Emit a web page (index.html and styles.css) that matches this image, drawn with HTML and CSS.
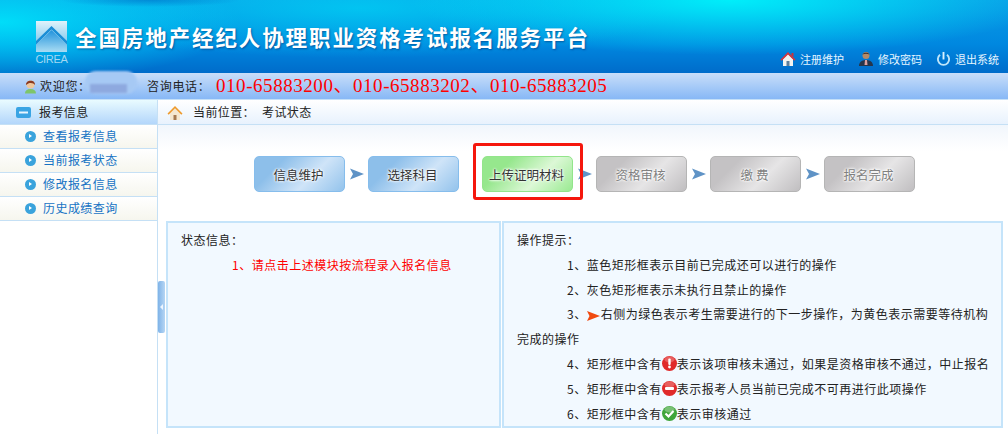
FILE: index.html
```html
<!DOCTYPE html>
<html lang="zh-CN">
<head>
<meta charset="utf-8">
<title>全国房地产经纪人协理职业资格考试报名服务平台</title>
<link rel="stylesheet" href="styles.css">
</head>
<body>
<header class="top">
  <div class="logo">
    <svg class="logo-mark" viewBox="0 0 31 31" width="31" height="31">
      <defs>
        <linearGradient id="lg" x1="0" y1="0" x2="0" y2="1"><stop offset="0" stop-color="#dff3fb"/><stop offset="1" stop-color="#5db8e8"/></linearGradient>
        <linearGradient id="lh" x1="0" y1="0" x2="0" y2="1"><stop offset="0" stop-color="#1f92dc"/><stop offset="1" stop-color="#a9dcf3"/></linearGradient>
      </defs>
      <rect width="31" height="31" fill="url(#lg)"/>
      <path d="M0 24 L15.500 9 L31 24 L31 31 L0 31Z" fill="url(#lh)"/>
      <path d="M0 20 L15.500 5 L31 20 L31 23.500 L15.500 8.500 L0 23.500Z" fill="#1a8ed6"/>
    </svg>
    <span class="logo-name">CIREA</span>
  </div>
  <h1 class="title">全国房地产经纪人协理职业资格考试报名服务平台</h1>
  <nav class="top-nav">
    <a class="top-link">
      <svg viewBox="0 0 16 16" width="16" height="16"><path d="M3 8v7h10V8L8 3z" fill="#f4f4f0"/><rect x="6.500" y="10" width="3" height="5" fill="#5c7f9c"/><path d="M11.500 2h2v4l-2-1.500z" fill="#c9323a"/><path d="M0.500 8.500 8 1l7.500 7.500-1.200 1.200L8 3.500 1.700 9.700z" fill="#d8343a"/></svg>
      <span>注册维护</span>
    </a>
    <a class="top-link">
      <svg viewBox="0 0 16 16" width="16" height="16"><circle cx="8" cy="4.500" r="3.500" fill="#b58a66"/><path d="M4.500 3.500C5 1 11 1 11.500 3.500 9.500 2.500 6.500 2.500 4.500 3.500z" fill="#3a3030"/><path d="M1 15c0-4 3-6 7-6s7 2 7 6z" fill="#26354a"/><path d="M7 9h2l.5 5h-3z" fill="#d9a0a0"/></svg>
      <span>修改密码</span>
    </a>
    <a class="top-link">
      <svg viewBox="0 0 16 16" width="15" height="16"><path d="M4.300 3.500a6 6 0 1 0 7.400 0" fill="none" stroke="#bfe6fa" stroke-width="2"/><rect x="7" y="0.500" width="2" height="8" fill="#d8f2ff"/></svg>
      <span>退出系统</span>
    </a>
  </nav>
</header>

<div class="welcome">
  <svg class="avatar" viewBox="0 0 13 16" width="13" height="16"><path d="M1 15.500c0-3 2-4.500 5.500-4.500S12 12.500 12 15.500z" fill="#7ec56a"/><circle cx="6.500" cy="6.500" r="4" fill="#f0c79c"/><path d="M2 7C1.500 1.500 11.500 1 11 7 9.500 4.500 5 4 2 7z" fill="#8a3a22"/></svg>
  <span class="welcome-label">欢迎您：</span>
  <span class="redacted"></span>
  <span class="hotline-label">咨询电话：</span>
  <span class="hotline">010-65883200、010-65883202、010-65883205</span>
</div>

<div class="main">
  <aside class="side">
    <div class="side-head">
      <svg viewBox="0 0 15 11" width="15" height="11"><rect width="15" height="11" rx="2" fill="#39a4e4"/><rect x="3" y="4.500" width="9" height="2" fill="#e8f6ff"/></svg>
      <span>报考信息</span>
    </div>
    <ul class="side-list">
      <li class="side-item"><i class="bullet"></i>查看报考信息</li>
      <li class="side-item"><i class="bullet"></i>当前报考状态</li>
      <li class="side-item"><i class="bullet"></i>修改报名信息</li>
      <li class="side-item"><i class="bullet"></i>历史成绩查询</li>
    </ul>
    <div class="collapse"><i></i></div>
  </aside>

  <main class="content">
    <div class="crumb">
      <svg viewBox="0 0 16 15" width="16" height="15"><path d="M3 8v7h10V8L8 3z" fill="#f4e8d0"/><rect x="6.500" y="10" width="3" height="5" fill="#a57a50"/><path d="M0.500 8.500 8 1l7.500 7.500-1.200 1.200L8 3.300 1.700 9.700z" fill="#ee9a2c"/></svg>
      <span class="crumb-label">当前位置：</span>
      <span>考试状态</span>
    </div>

    <div class="steps">
      <span class="step blue">信息维护</span>
      <svg class="arrow" viewBox="0 0 14 12" width="14" height="12"><path d="M0 0.500 14 6 0 11.500 3 6z"/></svg>
      <span class="step blue">选择科目</span>
      <span class="step green">上传证明材料</span>
      <svg class="arrow" viewBox="0 0 14 12" width="14" height="12"><path d="M0 0.500 14 6 0 11.500 3 6z"/></svg>
      <span class="step gray">资格审核</span>
      <svg class="arrow" viewBox="0 0 14 12" width="14" height="12"><path d="M0 0.500 14 6 0 11.500 3 6z"/></svg>
      <span class="step gray">缴 费</span>
      <svg class="arrow" viewBox="0 0 14 12" width="14" height="12"><path d="M0 0.500 14 6 0 11.500 3 6z"/></svg>
      <span class="step gray">报名完成</span>
    </div>

    <div class="panels">
      <section class="panel state">
        <p class="line">状态信息：</p>
        <p class="line indent alert">1、请点击上述模块按流程录入报名信息</p>
      </section>
      <section class="panel tips">
        <p class="line">操作提示：</p>
        <p class="line indent">1、蓝色矩形框表示目前已完成还可以进行的操作</p>
        <p class="line indent">2、灰色矩形框表示未执行且禁止的操作</p>
        <p class="line indent">3、<svg class="ico-arrow" viewBox="0 0 13 10" width="13" height="10"><path d="M0 0 13 5 0 10 2.500 5z" fill="#f04a10"/></svg>右侧为绿色表示考生需要进行的下一步操作，为黄色表示需要等待机构</p>
        <p class="line">完成的操作</p>
        <p class="line indent">4、矩形框中含有<svg class="ico" viewBox="0 0 15 15" width="15" height="15"><circle cx="7.500" cy="7.500" r="7.500" fill="#e02a2a"/><ellipse cx="7.500" cy="3.500" rx="5" ry="3" fill="#fff" opacity=".25"/><rect x="6.300" y="2.500" width="2.400" height="6.500" rx="1" fill="#fff"/><circle cx="7.500" cy="11" r="1.400" fill="#fff"/></svg>表示该项审核未通过，如果是资格审核不通过，中止报名</p>
        <p class="line indent">5、矩形框中含有<svg class="ico" viewBox="0 0 15 15" width="15" height="15"><circle cx="7.500" cy="7.500" r="7.500" fill="#e02a2a"/><ellipse cx="7.500" cy="3.500" rx="5" ry="3" fill="#fff" opacity=".25"/><rect x="3" y="6" width="9" height="3" rx="1" fill="#fff"/></svg>表示报考人员当前已完成不可再进行此项操作</p>
        <p class="line indent">6、矩形框中含有<svg class="ico" viewBox="0 0 15 15" width="15" height="15"><circle cx="7.500" cy="7.500" r="7.500" fill="#3fa53a"/><ellipse cx="7.500" cy="3.500" rx="5" ry="3" fill="#fff" opacity=".3"/><path d="M3.500 7.500 6.500 10.500 11.500 5" fill="none" stroke="#fff" stroke-width="2.200"/></svg>表示审核通过</p>
      </section>
    </div>
  </main>
</div>
</body>
</html>
```
FILE: styles.css
```css
* { box-sizing: border-box; }
html, body { margin: 0; padding: 0; }
body {
  width: 1008px;
  height: 434px;
  overflow: hidden;
  background: #fff;
  font: 12px/1.2 "Noto Sans CJK SC", "Liberation Sans", sans-serif;
  color: #222;
}
p, h1, ul { margin: 0; padding: 0; }
ul { list-style: none; }

.top {
  height: 73px;
  display: flex;
  align-items: flex-start;
  padding: 21px 9px 0 36px;
  background:
    radial-gradient(ellipse 90px 7px at 150px 0, rgba(0,120,205,.7), rgba(0,120,205,0)),
    radial-gradient(ellipse 320px 55px at 730px 0, rgba(0,238,250,1), rgba(0,210,248,0)),
    radial-gradient(ellipse 240px 60px at 0 22px, rgba(0,225,250,.95), rgba(0,200,245,0)),
    radial-gradient(ellipse 320px 50px at 360px 8px, rgba(0,210,245,.75), rgba(0,200,245,0)),
    linear-gradient(#0a9ce6, #0088e0 60%, #006cca);
}
.logo { width: 31px; display: flex; flex-direction: column; align-items: center; }
.logo-mark { display: block; }
.logo-name { font: 11px/10px "Liberation Sans", sans-serif; color: #a4d8f2; margin-top: 2px; letter-spacing: -.3px; }
.title {
  margin: 2px 0 0 8px;
  font-size: 21.500px;
  line-height: 28px;
  font-weight: 700;
  letter-spacing: 1.900px;
  white-space: nowrap;
  color: #fff;
  text-shadow: 1px 1px 2px rgba(0,40,110,.55);
}
.top-nav { margin-left: auto; margin-top: 30px; display: flex; gap: 14px; }
.top-link { display: flex; align-items: center; gap: 4px; color: #e6f5ff; font-size: 11px; line-height: 16px; }
.top-link svg { display: block; }

.welcome {
  height: 27px;
  display: flex;
  align-items: center;
  padding: 0 0 0 24px;
  background: linear-gradient(#c9def9, #87b8f6);
  border-bottom: 1px solid #c5e0f8;
}
.avatar { display: block; margin-right: 3px; }
.welcome-label { letter-spacing: .7px; width: 45px; white-space: nowrap; }
.redacted {
  width: 52px;
  height: 23px;
  margin: -7px 10px 0 0;
  border-radius: 11px;
  background: linear-gradient(#8ea9df, #8ea9df) 5px 13px / 37px 9px no-repeat, #a6c9f4;
  filter: blur(1px);
}
.hotline-label { letter-spacing: .7px; width: 69px; white-space: nowrap; }
.hotline {
  font: 19px/20px "Liberation Serif", "Noto Sans CJK SC", serif;
  color: #f00;
  white-space: nowrap;
  letter-spacing: .55px;
}

.main { display: flex; height: 334px; }

.side { position: relative; width: 158px; flex: none; border-right: 1px solid #c5e0f5; }
.side-head {
  height: 25px;
  display: flex;
  align-items: center;
  padding-left: 16px;
  gap: 8px;
  letter-spacing: .4px;
  background: linear-gradient(#e9fbff, #b3d6fb);
  border-bottom: 1px solid #c5e0f5;
}
.side-head svg { display: block; }
.side-item {
  height: 24px;
  display: flex;
  align-items: center;
  padding-left: 25px;
  color: #1673c4;
  letter-spacing: .45px;
  background: linear-gradient(#fff, #f6f6ee);
  border-bottom: 1px solid #c5e0f5;
}
.bullet {
  width: 11px;
  height: 11px;
  margin-right: 7px;
  border-radius: 50%;
  background: #3aa3dc;
  position: relative;
}
.bullet::after {
  content: "";
  position: absolute;
  left: 4px;
  top: 3px;
  border: 2.500px solid transparent;
  border-left: 3.500px solid #fff;
  border-right: 0;
}
.collapse {
  position: absolute;
  right: -8px;
  top: 181px;
  width: 7px;
  height: 52px;
  border-radius: 2px;
  background: linear-gradient(90deg, #7fb3e8, #b6d6f4);
  display: flex;
  align-items: center;
  justify-content: center;
}
.collapse i { border: 3px solid transparent; border-right: 3px solid #eef6ff; border-left: 0; }

.content { flex: 1; min-width: 0; padding-bottom: 6px; display: flex; flex-direction: column; }
.crumb {
  height: 25px;
  flex: none;
  display: flex;
  align-items: center;
  padding-left: 9px;
  letter-spacing: .4px;
  background: linear-gradient(#fff, #e8f2fd);
  border-bottom: 1px solid #c5e0f5;
}
.crumb svg { display: block; margin-right: 10px; }
.crumb-label { width: 69px; }

.steps {
  height: 96px;
  flex: none;
  display: flex;
  align-items: flex-start;
  padding: 31px 0 0 96px;
  background: linear-gradient(#f1f6fc, #fff 26px);
}
.step {
  width: 91px;
  height: 36px;
  flex: none;
  display: flex;
  align-items: center;
  justify-content: center;
  border-radius: 5px;
  font-size: 12.500px;
  color: #333;
  padding-right: 2px;
  text-shadow: 0 0 2px #fff, 0 0 3px #fff, 0 0 3px #fff;
}
.blue { border: 1px solid #86bdec; background: linear-gradient(135deg, #8dbfea 0, #8dbfea 25%, #cfe4f8 62%, #93c3ec 100%); }
.green {
  position: relative;
  margin-left: 23px;
  border: 1px solid #93e58b;
  background: linear-gradient(135deg, #96e78d 0, #96e78d 25%, #dcf8d6 62%, #9aea92 100%);
}
.green::after {
  content: "";
  position: absolute;
  left: -10px;
  right: -11px;
  top: -14px;
  bottom: -9px;
  border: 3px solid #f5170d;
  border-radius: 3px;
}
.gray {
  border: 1px solid #b5b5b5;
  color: #808080;
  background: linear-gradient(135deg, #c4c2c4 0, #c4c2c4 25%, #e6e5e6 60%, #c0bec0 100%);
}
.arrow { flex: none; margin: 12px 4px 0 5px; fill: #5f93c6; }

.panels { flex: 1; display: flex; gap: 1px; padding: 0 5px 0 8px; min-height: 0; }
.panel { border: 2px solid #c5e4fa; background: #f2f9ff; padding-top: 5px; }
.state { width: 335px; padding-left: 13px; }
.tips { flex: 1; padding-left: 13px; }
.line { height: 24.800px; line-height: 24.800px; letter-spacing: .5px; white-space: nowrap; }
.indent { padding-left: 50px; }
.alert { color: #f00; padding-left: 51px; }
.ico-arrow, .ico { vertical-align: -2px; }
.ico-arrow { margin-right: 1px; }
```
